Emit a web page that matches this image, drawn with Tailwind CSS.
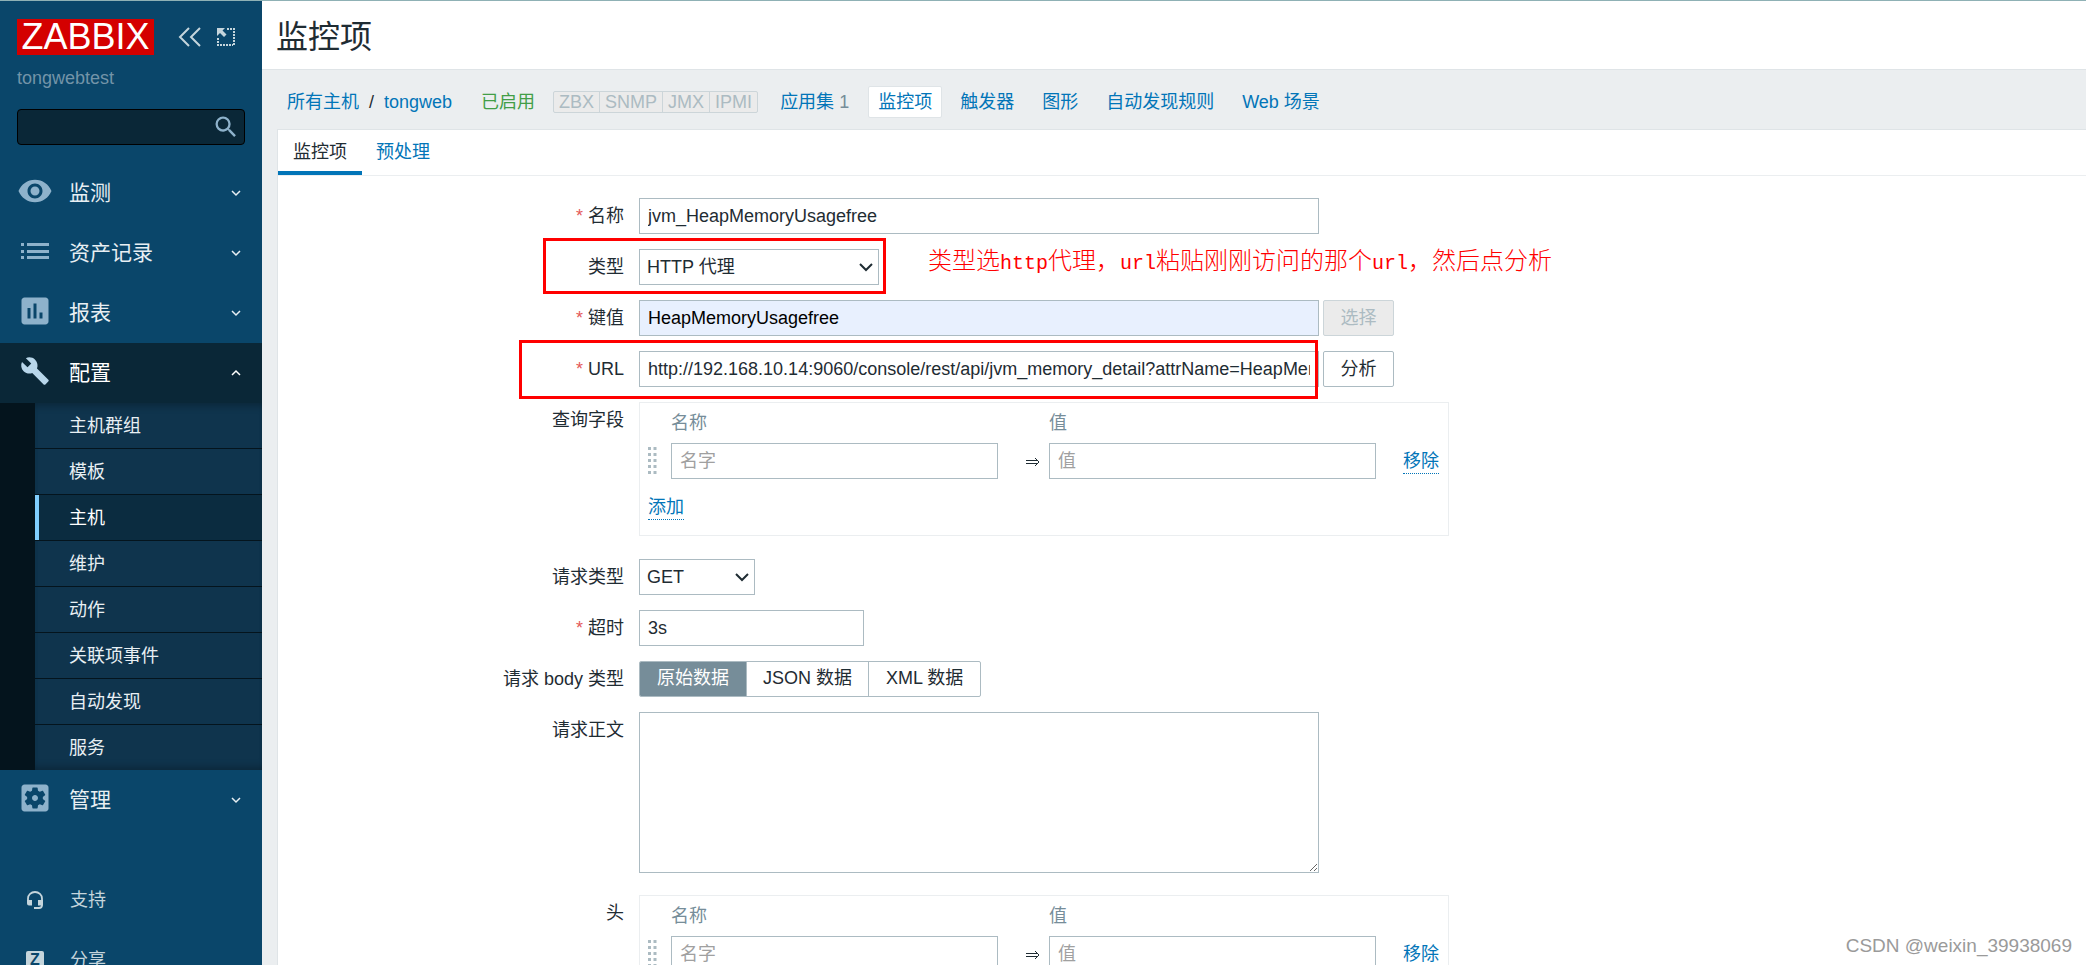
<!DOCTYPE html>
<html lang="zh-CN">
<head>
<meta charset="utf-8">
<title>监控项</title>
<script src="https://cdn.jsdelivr.net/npm/@tailwindcss/browser@4"></script>
</head>
<body class="flex h-screen flex-col overflow-hidden border-t border-[#8fb1b5] bg-[#ebeef0] font-['Liberation_Sans','Noto_Sans_CJK_SC',sans-serif] text-lg/6 text-[#1f2c33]">
<div class="flex min-h-0 flex-1">

<aside class="flex w-[262px] shrink-0 flex-col overflow-hidden bg-[#0a466a]">
  <div class="flex shrink-0 items-center px-[17px] pt-[18px]">
    <a href="#" class="flex h-9 w-[137px] items-center justify-center bg-[#d40000] text-4xl/9 text-white">ZABBIX</a>
    <button aria-label="收起" class="ml-6 text-[#c5d5dc]"><svg class="h-5 w-6" viewBox="0 0 24 20" fill="none" stroke="currentColor" stroke-width="2"><path d="M11 1 2 10l9 9M22 1l-9 9 9 9"/></svg></button>
    <button aria-label="隐藏" class="ml-[14px] text-[#c5d5dc]"><svg class="h-5 w-5" viewBox="0 0 20 20"><path d="M1 1h8L6.500 3.500l4 4-2.500 2.500-4-4L1 9z" fill="currentColor"/><path d="M11 2h8M18 4v15M2 11v8M4 18h13" fill="none" stroke="currentColor" stroke-width="2" stroke-dasharray="2 1"/></svg></button>
  </div>
  <div class="mt-[11px] shrink-0 px-[17px] text-[#7394a8]">tongwebtest</div>
  <form class="mx-[17px] mt-[19px] flex h-9 shrink-0 items-center rounded-sm border border-black bg-[#0a2737]">
    <input aria-label="搜索" type="search" class="h-full min-w-0 flex-1 bg-transparent px-2 text-white outline-none">
    <button type="button" aria-label="搜索" class="mr-1 text-[#8eb2cb]"><svg class="h-7 w-7" viewBox="0 0 24 24" fill="currentColor"><path d="M15.500 14h-.79l-.28-.27A6.470 6.470 0 0 0 16 9.500 6.500 6.500 0 1 0 9.500 16c1.610 0 3.090-.59 4.230-1.570l.27.28v.79l5 4.990L20.490 19l-4.990-5zm-6 0C7.010 14 5 11.990 5 9.500S7.010 5 9.500 5 14 7.010 14 9.500 11.990 14 9.500 14z"/></svg></button>
  </form>

  <nav class="mt-[18px] flex shrink-0 flex-col text-[21px] text-[#e8eff3]">
    <a href="#" class="flex h-15 items-center pr-5 pl-[17px]">
      <svg class="mb-1 h-9 w-9 text-[#8eb2cb]" viewBox="0 0 24 24" fill="currentColor"><path d="M12 4.500C7 4.500 2.730 7.610 1 12c1.730 4.390 6 7.500 11 7.500s9.270-3.110 11-7.500c-1.730-4.390-6-7.500-11-7.500zM12 17c-2.760 0-5-2.240-5-5s2.240-5 5-5 5 2.240 5 5-2.240 5-5 5zm0-8c-1.660 0-3 1.340-3 3s1.340 3 3 3 3-1.340 3-3-1.340-3-3-3z"/></svg>
      <span class="ml-4 flex-1">监测</span>
      <svg class="h-3 w-3" viewBox="0 0 12 12" fill="none" stroke="currentColor" stroke-width="1.500"><path d="m2 4 4 4 4-4"/></svg>
    </a>
    <a href="#" class="flex h-15 items-center pr-5 pl-[17px]">
      <svg class="mb-1 h-9 w-9 text-[#8eb2cb]" viewBox="0 0 36 36" fill="currentColor"><path d="M4 10h3v3H4zm6 0h22v3H10zM4 17h3v3H4zm6 0h22v3H10zM4 23h3v3H4zm6 0h22v3H10z"/></svg>
      <span class="ml-4 flex-1">资产记录</span>
      <svg class="h-3 w-3" viewBox="0 0 12 12" fill="none" stroke="currentColor" stroke-width="1.500"><path d="m2 4 4 4 4-4"/></svg>
    </a>
    <a href="#" class="flex h-15 items-center pr-5 pl-[17px]">
      <svg class="mb-1 h-9 w-9 text-[#8eb2cb]" viewBox="0 0 24 24" fill="currentColor"><path d="M19 3H5c-1.100 0-2 .9-2 2v14c0 1.100.9 2 2 2h14c1.100 0 2-.9 2-2V5c0-1.100-.9-2-2-2zM9 17H7v-7h2v7zm4 0h-2V7h2v10zm4 0h-2v-4h2v4z"/></svg>
      <span class="ml-4 flex-1">报表</span>
      <svg class="h-3 w-3" viewBox="0 0 12 12" fill="none" stroke="currentColor" stroke-width="1.500"><path d="m2 4 4 4 4-4"/></svg>
    </a>
    <a href="#" class="flex h-15 items-center bg-[#0a2737] pr-5 pl-5 text-white">
      <svg class="mb-1 h-[30px] w-[30px] text-[#b8d6ea]" viewBox="0 0 24 24" fill="currentColor"><path d="M22.700 19l-9.100-9.100c.9-2.300.4-5-1.500-6.900-2-2-5-2.400-7.400-1.300L9 6 6 9 1.600 4.700C.4 7.100.9 10.100 2.900 12.100c1.900 1.900 4.600 2.400 6.900 1.500l9.100 9.100c.4.4 1 .4 1.400 0l2.300-2.300c.5-.4.5-1.100.1-1.400z"/></svg>
      <span class="ml-[19px] flex-1">配置</span>
      <svg class="h-3 w-3" viewBox="0 0 12 12" fill="none" stroke="currentColor" stroke-width="1.500"><path d="m2 8 4-4 4 4"/></svg>
    </a>
    <div class="flex flex-col divide-y divide-[#04141d] border-l-[35px] border-[#04141d] bg-[#0f344d] text-lg/6 shadow-[inset_0_8px_8px_-6px_rgba(0,0,0,0.3),inset_0_-8px_8px_-6px_rgba(0,0,0,0.3)]">
      <a href="#" class="flex h-[46px] items-center pl-[34px]">主机群组</a>
      <a href="#" class="flex h-[46px] items-center pl-[34px]">模板</a>
      <a href="#" class="flex h-[46px] items-center bg-[#0b2c40] pl-[34px] text-white shadow-[inset_4px_0_#80cfff]">主机</a>
      <a href="#" class="flex h-[46px] items-center pl-[34px]">维护</a>
      <a href="#" class="flex h-[46px] items-center pl-[34px]">动作</a>
      <a href="#" class="flex h-[46px] items-center pl-[34px]">关联项事件</a>
      <a href="#" class="flex h-[46px] items-center pl-[34px]">自动发现</a>
      <a href="#" class="flex h-[45px] items-center pl-[34px]">服务</a>
    </div>
    <a href="#" class="flex h-15 items-center pr-5 pl-[17px]">
      <svg class="mb-1 h-9 w-9 text-[#8eb2cb]" viewBox="0 0 24 24" fill="currentColor"><path d="M12 10c-1.100 0-2 .9-2 2s.9 2 2 2 2-.9 2-2-.9-2-2-2zm7-7H5c-1.110 0-2 .9-2 2v14c0 1.100.89 2 2 2h14c1.110 0 2-.9 2-2V5c0-1.100-.89-2-2-2zm-1.750 9c0 .23-.02.46-.05.68l1.480 1.160c.13.11.17.3.08.45l-1.400 2.420c-.09.15-.27.21-.43.15l-1.740-.7c-.36.28-.76.51-1.180.69l-.26 1.850c-.03.17-.18.3-.35.3h-2.800c-.17 0-.32-.13-.35-.29l-.26-1.850c-.43-.18-.82-.41-1.180-.69l-1.740.7c-.16.06-.34 0-.43-.15l-1.400-2.420c-.09-.15-.05-.34.08-.45l1.480-1.160c-.03-.23-.05-.46-.05-.69 0-.23.02-.46.05-.68l-1.480-1.160c-.13-.11-.17-.3-.08-.45l1.400-2.420c.09-.15.27-.21.43-.15l1.740.7c.36-.28.76-.51 1.180-.69l.26-1.850c.03-.17.18-.3.35-.3h2.800c.17 0 .32.13.35.29l.26 1.850c.43.18.82.41 1.180.69l1.740-.7c.16-.06.34 0 .43.15l1.400 2.420c.09.15.05.34-.08.45l-1.480 1.160c.03.23.05.46.05.69z"/></svg>
      <span class="ml-4 flex-1">管理</span>
      <svg class="h-3 w-3" viewBox="0 0 12 12" fill="none" stroke="currentColor" stroke-width="1.500"><path d="m2 4 4 4 4-4"/></svg>
    </a>
  </nav>
  <nav class="mt-10 flex shrink-0 flex-col text-[#c5d5dc]">
    <a href="#" class="flex h-15 items-center gap-[26px] pl-[26px]">
      <svg class="h-[18px] w-[18px]" viewBox="0 0 18 18"><path d="M2 10V7.500a7 6.500 0 0 1 14 0V14q0 3-3 3H9" fill="none" stroke="currentColor" stroke-width="1.800"/><path d="M1 9h5v5.500H3q-2 0-2-2zM12 9h5v5.500h-5zM8 16h4v2H8z" fill="currentColor"/></svg>支持</a>
    <a href="#" class="flex h-15 items-center gap-[26px] pl-[26px]">
      <span class="flex h-[18px] w-[18px] items-center justify-center rounded-xs bg-[#c5d5dc] text-base/4 font-bold text-[#0a466a]">Z</span>分享</a>
  </nav>
</aside>

<main class="relative flex min-w-0 flex-1 flex-col">
  <header class="flex h-[69px] shrink-0 items-center border-b border-[#dfe4e7] bg-white pt-[3px] pl-[14px]">
    <h1 class="text-[32px]/9">监控项</h1>
  </header>
  <nav class="flex h-[59px] shrink-0 items-center pt-1 pl-[25px] text-[#0275b8]">
    <a href="#">所有主机</a><span class="mx-[10px] text-[#1f2c33]">/</span><a href="#">tongweb</a>
    <span class="ml-[29px] text-[#429e47]">已启用</span>
    <span class="ml-[18px] flex divide-x divide-[#ccd5d9] rounded-xs border border-[#ccd5d9] bg-[#ebebeb] text-lg/5 text-[#acbbc2]"><span class="px-[5px]">ZBX</span><span class="px-[5px]">SNMP</span><span class="px-[5px]">JMX</span><span class="px-[5px]">IPMI</span></span>
    <span class="ml-[22px]"><a href="#">应用集</a> <sup class="top-0 align-baseline text-lg text-[#768d99]">1</sup></span>
    <a href="#" class="ml-[19px] rounded-xs border border-[#dfe4e7] bg-white px-[9px] py-[3px]">监控项</a>
    <a href="#" class="ml-[18px]">触发器</a>
    <a href="#" class="ml-7">图形</a>
    <a href="#" class="ml-7">自动发现规则</a>
    <a href="#" class="ml-7">Web 场景</a>
  </nav>

  <section class="ml-[15px] flex-1 border-t border-l border-[#dfe4e7] bg-white">
    <div class="flex h-[46px] border-b border-[#ebeef0]">
      <button class="border-b-4 border-[#0275b8] px-[15px] pt-0.5">监控项</button>
      <button class="border-b-4 border-transparent px-[14px] pt-0.5 text-[#0275b8]">预处理</button>
    </div>
    <form class="flex flex-col gap-[15px] pt-[22px]">
      <div class="flex">
        <label for="name" class="mr-[15px] w-[346px] text-right leading-9"><span class="text-[#e45959]">*</span> 名称</label>
        <input id="name" value="jvm_HeapMemoryUsagefree" class="h-9 w-[680px] border border-[#acbbc2] px-2 outline-none">
      </div>
      <div class="relative flex">
        <label for="type" class="mr-[15px] w-[346px] text-right leading-9">类型</label>
        <div class="relative">
          <select id="type" class="h-9 w-60 appearance-none border border-[#acbbc2] bg-white px-[7px] outline-none"><option>HTTP 代理</option></select>
          <svg class="pointer-events-none absolute top-3 right-[5px] h-3 w-4" viewBox="0 0 16 12" fill="none" stroke="currentColor" stroke-width="2"><path d="m2 3 6 6 6-6"/></svg>
        </div>
        <div class="pointer-events-none absolute -top-[11px] left-[265px] h-[56px] w-[343px] border-3 border-[#ff0000]"></div>
        <p class="absolute -top-1 left-[650px] text-2xl/8 font-light whitespace-nowrap text-[#ff0000]">类型选<span class="font-['Liberation_Mono',monospace] text-xl">http</span>代理，<span class="font-['Liberation_Mono',monospace] text-xl">url</span>粘贴刚刚访问的那个<span class="font-['Liberation_Mono',monospace] text-xl">url</span>，然后点分析</p>
      </div>
      <div class="flex">
        <label for="key" class="mr-[15px] w-[346px] text-right leading-9"><span class="text-[#e45959]">*</span> 键值</label>
        <input id="key" value="HeapMemoryUsagefree" class="h-9 w-[680px] border border-[#acbbc2] bg-[#e8f0fe] px-2 text-black outline-none">
        <button type="button" disabled class="ml-1 h-9 w-[71px] rounded-xs border border-[#ccd5d9] bg-[#ebebeb] text-[#acbbc2]">选择</button>
      </div>
      <div class="relative flex">
        <label for="url" class="mr-[15px] w-[346px] text-right leading-9"><span class="text-[#e45959]">*</span> URL</label>
        <input id="url" value="http://192.168.10.14:9060/console/rest/api/jvm_memory_detail?attrName=HeapMemoryUsagefree" class="h-9 w-[680px] border border-[#acbbc2] px-2 outline-none">
        <button type="button" class="ml-1 h-9 w-[71px] rounded-xs border border-[#acbbc2] bg-white">分析</button>
        <div class="pointer-events-none absolute -top-[11px] left-[241px] h-[59px] w-[799px] border-3 border-[#ff0000]"></div>
      </div>
      <div class="mb-2 flex">
        <div class="mr-[15px] w-[346px] text-right leading-9">查询字段</div>
        <div class="h-[134px] w-[810px] border border-[#ebeef0]">
          <div class="flex h-10 items-center text-[#768d99]"><span class="ml-[31px] w-[378px]">名称</span><span>值</span></div>
          <div class="flex h-9 items-center">
            <svg class="ml-[7px] h-7 w-[10px] text-[#acbbc2]" viewBox="0 0 10 28" fill="none" stroke="currentColor" stroke-width="3" stroke-dasharray="3 3"><path d="M2.500 0v28M8 0v28"/></svg>
            <input aria-label="名称" placeholder="名字" class="ml-[14px] h-9 w-[327px] border border-[#acbbc2] px-2 outline-none placeholder:text-[#a0a0a0]">
            <span class="w-[51px] pr-[9px] text-right"><svg class="inline h-3 w-[14px]" viewBox="0 0 14 12" fill="none" stroke="currentColor"><path d="M0 4.500h11M0 7.500h11M9 2l4 4-4 4"/></svg></span>
            <input aria-label="值" placeholder="值" class="h-9 w-[327px] border border-[#acbbc2] px-2 outline-none placeholder:text-[#a0a0a0]">
            <button type="button" class="mt-0.5 ml-[27px] border-b border-dotted border-[#0275b8] leading-[23px] text-[#0275b8]">移除</button>
          </div>
          <button type="button" class="mt-[17px] ml-2 border-b border-dotted border-[#0275b8] leading-[23px] text-[#0275b8]">添加</button>
        </div>
      </div>
      <div class="flex">
        <label for="method" class="mr-[15px] w-[346px] text-right leading-9">请求类型</label>
        <div class="relative">
          <select id="method" class="h-9 w-29 appearance-none border border-[#acbbc2] bg-white px-[7px] outline-none"><option>GET</option></select>
          <svg class="pointer-events-none absolute top-3 right-[5px] h-3 w-4" viewBox="0 0 16 12" fill="none" stroke="currentColor" stroke-width="2"><path d="m2 3 6 6 6-6"/></svg>
        </div>
      </div>
      <div class="flex">
        <label for="timeout" class="mr-[15px] w-[346px] text-right leading-9"><span class="text-[#e45959]">*</span> 超时</label>
        <input id="timeout" value="3s" class="h-9 w-[225px] border border-[#acbbc2] px-2 outline-none">
      </div>
      <div class="flex">
        <div class="mr-[15px] w-[346px] text-right leading-9">请求 body 类型</div>
        <div class="flex h-9 divide-x divide-[#acbbc2] overflow-hidden rounded-xs border border-[#acbbc2] leading-8">
          <label class="bg-[#768d99] px-[17px] text-white"><input type="radio" name="body" class="sr-only" checked>原始数据</label>
          <label class="px-4"><input type="radio" name="body" class="sr-only">JSON 数据</label>
          <label class="px-[17px]"><input type="radio" name="body" class="sr-only">XML 数据</label>
        </div>
      </div>
      <div class="mb-[7px] flex">
        <label for="body" class="mr-[15px] w-[346px] text-right leading-9">请求正文</label>
        <textarea id="body" class="h-[161px] w-[680px] resize border border-[#acbbc2] px-2 outline-none"></textarea>
      </div>
      <div class="flex">
        <div class="mr-[15px] w-[346px] text-right leading-9">头</div>
        <div class="h-[134px] w-[810px] border border-[#ebeef0]">
          <div class="flex h-10 items-center text-[#768d99]"><span class="ml-[31px] w-[378px]">名称</span><span>值</span></div>
          <div class="flex h-9 items-center">
            <svg class="ml-[7px] h-7 w-[10px] text-[#acbbc2]" viewBox="0 0 10 28" fill="none" stroke="currentColor" stroke-width="3" stroke-dasharray="3 3"><path d="M2.500 0v28M8 0v28"/></svg>
            <input aria-label="名称" placeholder="名字" class="ml-[14px] h-9 w-[327px] border border-[#acbbc2] px-2 outline-none placeholder:text-[#a0a0a0]">
            <span class="w-[51px] pr-[9px] text-right"><svg class="inline h-3 w-[14px]" viewBox="0 0 14 12" fill="none" stroke="currentColor"><path d="M0 4.500h11M0 7.500h11M9 2l4 4-4 4"/></svg></span>
            <input aria-label="值" placeholder="值" class="h-9 w-[327px] border border-[#acbbc2] px-2 outline-none placeholder:text-[#a0a0a0]">
            <button type="button" class="mt-0.5 ml-[27px] border-b border-dotted border-[#0275b8] leading-[23px] text-[#0275b8]">移除</button>
          </div>
        </div>
      </div>
    </form>
  </section>
  <div class="absolute right-[14px] bottom-[7px] text-[19px]/6 text-[#9a9a9a]">CSDN @weixin_39938069</div>
</main>
</div>
</body>
</html>
